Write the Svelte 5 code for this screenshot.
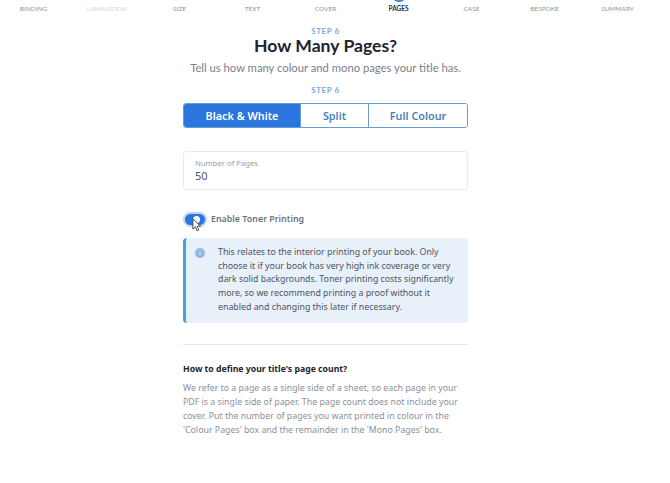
<script>
  const steps = ['Binding', 'Lamination', 'Size', 'Text', 'Cover', 'Pages', 'Case', 'Bespoke', 'Summary']
  const active = 'Pages'
  const modes = ['Black & White', 'Split', 'Full Colour']
  let mode = 'Black & White'
  let pages = 50
</script>

<div class="page">
  <nav class="steps">
    {#each steps as s}
      <div class="step" class:active={s === active} class:faded={s === 'Lamination'}>
        {#if s === active}<span class="dot"></span>{/if}
        {s}
      </div>
    {/each}
  </nav>

  <main class="col">
    <header class="intro">
      <div class="eyebrow">STEP 6</div>
      <h1>How Many Pages?</h1>
      <p class="sub">Tell us how many colour and mono pages your title has.</p>
      <div class="eyebrow second">STEP 6</div>
    </header>

    <div class="modes">
      {#each modes as m}
        <button class:on={mode === m} onclick={() => (mode = m)}>{m}</button>
      {/each}
    </div>

    <div class="field">
      <label for="pages">Number of Pages</label>
      <input id="pages" bind:value={pages} />
    </div>

    <div class="toggle-row">
      <span class="toggle">
        <span class="knob"></span>
        <svg class="cursor" width="10" height="14" viewBox="0 0 12 17">
          <path d="M1 1v12.5l3-2.8 2 4.8 2.2-1-2-4.6h4.2z" fill="#fff" stroke="#3a3f46" stroke-width="1.1" stroke-linejoin="round" />
        </svg>
      </span>
      <span class="toggle-label">Enable Toner Printing</span>
    </div>

    <div class="note">
      <svg class="info" width="10" height="10" viewBox="0 0 10 10">
        <circle cx="5" cy="5" r="5" fill="#8fb8e6" />
        <rect x="4.4" y="4.2" width="1.2" height="3.4" fill="#c4d9f2" />
        <rect x="4.4" y="2.4" width="1.2" height="1.2" fill="#c4d9f2" />
      </svg>
      <p>This relates to the interior printing of your book. Only choose it if your book has very high ink coverage or very dark solid backgrounds. Toner printing costs significantly more, so we recommend printing a proof without it enabled and changing this later if necessary.</p>
    </div>

    <hr />

    <h2>How to define your title's page count?</h2>
    <p class="body">We refer to a page as a single side of a sheet, so each page in your PDF is a single side of paper. The page count does not include your cover. Put the number of pages you want printed in colour in the 'Colour Pages' box and the remainder in the 'Mono Pages' box.</p>
  </main>
</div>

<style>
  :global(body) {
    margin: 0;
    background: #fff;
    font-family: "Noto Sans", "Open Sans", sans-serif;
  }
  .page {
    width: 670px;
    height: 483px;
    overflow: hidden;
  }
  .steps {
    display: grid;
    grid-template-columns: repeat(9, 73px);
    margin-left: -3px;
    padding-top: 5px;
  }
  .step {
    position: relative;
    text-align: center;
    font-family: Lato, sans-serif;
    font-size: 6.5px;
    line-height: 8px;
    color: #8d939c;
    text-transform: uppercase;
  }
  .step.faded {
    color: #d3d6da;
  }
  .step.active {
    color: #27303c;
    font-weight: 700;
  }
  .dot {
    position: absolute;
    top: -8px;
    left: 50%;
    width: 12px;
    height: 5px;
    margin-left: -6px;
    border-radius: 0 0 6px 6px;
    background: #3f8fd8;
  }
  .col {
    width: 285px;
    margin-left: 183px;
    display: flex;
    flex-direction: column;
  }
  .intro {
    display: flex;
    flex-direction: column;
    align-items: center;
    white-space: nowrap;
  }
  .eyebrow {
    margin-top: 13px;
    font-family: Lato, sans-serif;
    font-size: 8px;
    line-height: 10px;
    font-weight: 700;
    letter-spacing: 0.6px;
    color: #7ba9d6;
  }
  .eyebrow.second {
    margin-top: 9px;
  }
  h1 {
    margin: -2px 0 0;
    font-family: Lato, sans-serif;
    font-size: 17.6px;
    line-height: 24px;
    font-weight: 700;
    color: #1c2430;
  }
  .sub {
    margin: 2px 0 0;
    font-family: Lato, sans-serif;
    font-size: 11.25px;
    line-height: 16px;
    color: #7a808c;
  }
  .modes {
    display: grid;
    grid-template-columns: 116px 68px 1fr;
    height: 23px;
    margin-top: 8px;
    border: 1px solid #6b9cd0;
    border-radius: 3px;
    overflow: hidden;
  }
  .modes button {
    padding: 0;
    border: 0;
    border-left: 1px solid #6b9cd0;
    background: #fff;
    color: #4a7fb6;
    font-family: "Noto Sans", sans-serif;
    font-size: 10.8px;
    font-weight: 600;
  }
  .modes button:first-child {
    border-left: 0;
  }
  .modes button.on {
    background: #2a76de;
    color: #fff;
  }
  .field {
    display: flex;
    flex-direction: column;
    height: 39px;
    margin-top: 23px;
    padding: 0 11px;
    box-sizing: border-box;
    border: 1px solid #e8eaec;
    border-radius: 3px;
    justify-content: center;
  }
  .field label {
    font-size: 7.7px;
    line-height: 11px;
    color: #9a9fa7;
  }
  .field input {
    width: 100%;
    padding: 0;
    border: 0;
    outline: 0;
    font-family: "Noto Sans", sans-serif;
    font-size: 11px;
    line-height: 14px;
    color: #4a5664;
  }
  .toggle-row {
    display: flex;
    align-items: center;
    gap: 6px;
    margin-top: 23px;
    margin-left: 2px;
  }
  .toggle {
    position: relative;
    display: block;
    width: 20px;
    height: 11px;
    border-radius: 6px;
    background: #2a76de;
    box-shadow: 0 0 0 2px #bcd5f3;
  }
  .knob {
    position: absolute;
    top: 2px;
    right: 5px;
    width: 7px;
    height: 7px;
    border-radius: 50%;
    background: #fff;
  }
  .cursor {
    position: absolute;
    top: 4px;
    left: 7px;
  }
  .toggle-label {
    font-size: 8.9px;
    line-height: 12px;
    font-weight: 600;
    color: #6e747d;
  }
  .note {
    display: flex;
    gap: 13px;
    margin-top: 13px;
    padding: 8px 10px 8px 9px;
    background: #e8f0fa;
    border-left: 3px solid #4a9fd6;
    border-radius: 4px;
  }
  .info {
    flex: none;
    margin-top: 2px;
  }
  .note p {
    margin: 0;
    font-size: 8.8px;
    line-height: 13.7px;
    color: #4d5560;
  }
  hr {
    width: 100%;
    height: 1px;
    margin: 21px 0 0;
    border: 0;
    background: #e5e7ea;
  }
  h2 {
    margin: 18px 0 0;
    font-size: 8.7px;
    line-height: 13px;
    font-weight: 700;
    color: #20262e;
  }
  .body {
    margin: 5px 0 0;
    font-size: 8.8px;
    line-height: 14.1px;
    color: #8b919b;
  }
</style>
